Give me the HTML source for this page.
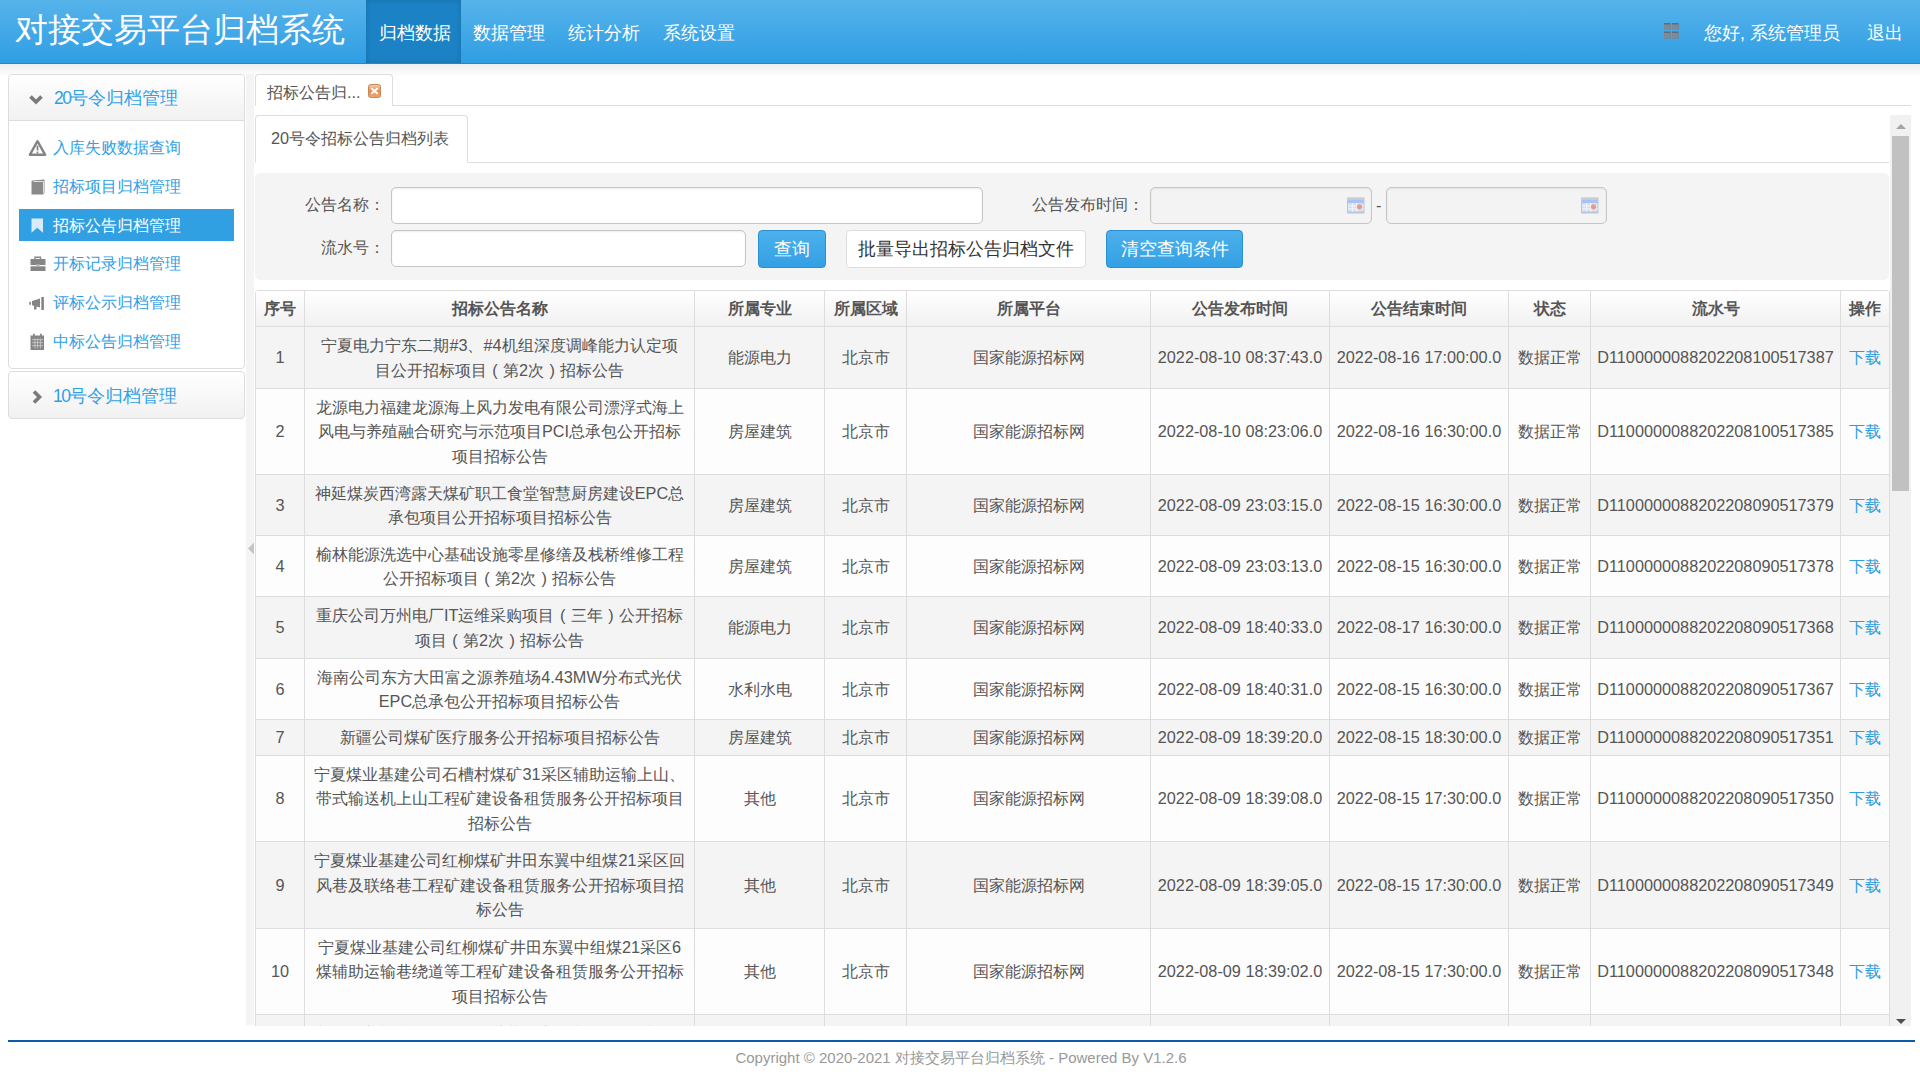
<!DOCTYPE html>
<html><head><meta charset="utf-8">
<style>
*{box-sizing:border-box}
html,body{margin:0;padding:0}
body{width:1920px;height:1080px;overflow:hidden;position:relative;background:#fff;font-family:"Liberation Sans",sans-serif;color:#555}
.abs{position:absolute}
#hdr{left:0;top:0;width:1920px;height:64px;background:linear-gradient(#56b3ea,#2f9ee4);border-bottom:1px solid #1a8ad8}
#shadow{left:0;top:64px;width:1920px;height:13px;background:linear-gradient(#eeeeee,#fff)}
.ttl{left:15px;top:9px;font-size:32.5px;line-height:42px;color:#fff;white-space:nowrap}
.nav{top:0;height:63px;line-height:67px;font-size:17.5px;color:#fff;white-space:nowrap}
.navact{left:366px;width:95px;line-height:63px;background:#1b83c5;box-shadow:inset 0 0 6px rgba(0,0,0,.15)}
.pnl{border:1px solid #ddd;border-radius:4px;background:#fff}
.ph{background:linear-gradient(#fff,#f1f1f1)}
.side{font-size:16.25px;color:#2fa1e6;white-space:nowrap;line-height:20px}

.tab1{left:255px;top:74px;width:138px;height:32px;border:1px solid #ddd;border-bottom:1px solid #fff;border-radius:4px 4px 0 0;background:#fff}
.tabline{left:255px;top:105px;width:1656px;height:1px;background:#ddd}
.t16{font-size:16.25px;white-space:nowrap;line-height:20px;color:#555}
.closei{left:368px;top:84px;width:13px;height:14px;border-radius:2px;background:linear-gradient(#f0a070,#d86a30);border:1px solid #c96028}
#sc{left:255px;top:115px;width:1635px;height:911px;overflow:hidden}
.tab2{left:0;top:0;width:213px;height:48px;border:1px solid #ddd;border-bottom:1px solid #fff;border-radius:4px 4px 0 0;background:#fff}
.tab2line{left:0;top:47px;width:1634px;height:1px;background:#ddd}
.form{left:0;top:58px;width:1634px;height:107px;background:#f4f4f4;border-radius:5px}
.inp{height:37px;border:1px solid #c6c6c6;border-radius:5px;background:#fff;box-shadow:inset 0 1px 2px rgba(0,0,0,.08)}
.btnb{height:38px;border:1px solid #2a8fd4;border-radius:4px;background:linear-gradient(#4db0eb,#33a0e4);color:#fff;font-size:17.5px;line-height:36px;text-align:center;white-space:nowrap}
.btnw{height:38px;border:1px solid #ddd;border-radius:4px;background:#fff;color:#333;font-size:17.5px;line-height:36px;text-align:center;white-space:nowrap}
table.g{position:absolute;left:0;top:175px;border-collapse:separate;border-spacing:0;table-layout:fixed;width:1635px;border-left:1px solid #ddd;border-top:1px solid #ddd;border-radius:4px 4px 0 0;font-size:16.25px;color:#555}
table.g td,table.g th{border-right:1px solid #ddd;border-bottom:1px solid #ddd;padding:0;text-align:center;vertical-align:middle;line-height:24.5px;white-space:nowrap}
table.g th{background:linear-gradient(#fff,#f1f1f1);color:#555;font-weight:bold;height:36px}
table.g tr.odd td{background:#f4f4f4}
table.g tr.even td{background:#fdfdfd}
.lk{color:#2c9de0}
.fp{display:inline-block;width:16.25px;text-align:center}
#sb{left:1890px;top:115px;width:21px;height:911px;background:#f1f1f1}
</style></head>
<body>
<div id="hdr" class="abs"></div>
<div id="shadow" class="abs"></div>
<div class="abs ttl">对接交易平台归档系统</div>
<div class="abs nav navact"></div>
<div class="abs nav" style="left:379px">归档数据</div>
<div class="abs nav" style="left:473px">数据管理</div>
<div class="abs nav" style="left:568px">统计分析</div>
<div class="abs nav" style="left:663px">系统设置</div>
<div class="abs nav" style="left:1704px">您好, 系统管理员</div>
<div class="abs nav" style="left:1867px">退出</div>

<!-- sidebar panel 1 -->
<div class="abs pnl" style="left:8px;top:74px;width:237px;height:295px;overflow:hidden">
  <div class="ph" style="height:46px;border-bottom:1px solid #ddd"></div>
</div>
<div class="abs side" style="left:54px;top:87.5px;font-size:17.5px"><span style="letter-spacing:-1.5px">20</span>号令归档管理</div>
<div class="abs" style="left:19px;top:209px;width:215px;height:32px;background:#30a0e3"></div>
<div class="abs side" style="left:53px;top:137px">入库失败数据查询</div>
<div class="abs side" style="left:53px;top:176px">招标项目归档管理</div>
<div class="abs side" style="left:53px;top:215px;color:#fff">招标公告归档管理</div>
<div class="abs side" style="left:53px;top:253px">开标记录归档管理</div>
<div class="abs side" style="left:53px;top:292px">评标公示归档管理</div>
<div class="abs side" style="left:53px;top:331px">中标公告归档管理</div>
<!-- sidebar panel 2 -->
<div class="abs pnl ph" style="left:8px;top:371px;width:237px;height:48px"></div>
<div class="abs side" style="left:53px;top:385.5px;font-size:17.5px"><span style="letter-spacing:-1.5px">10</span>号令归档管理</div>

<!-- splitter -->
<div class="abs" style="left:246px;top:74px;width:8px;height:951px;background:#f4f4f4"></div>


<!-- outer tab -->
<div class="abs tabline"></div>
<div class="abs tab1"></div>
<div class="abs t16" style="left:267px;top:82px">招标公告归...</div>
<svg class="abs" style="left:368px;top:84px" width="13" height="14" viewBox="0 0 13 14"><defs><linearGradient id="cg" x1="0" y1="0" x2="0" y2="1"><stop offset="0" stop-color="#f8cfa5"/><stop offset="0.5" stop-color="#e98a55"/><stop offset="1" stop-color="#eaa86f"/></linearGradient></defs><rect x="0.5" y="0.5" width="12" height="13" rx="2" fill="url(#cg)" stroke="#c28a5a" stroke-width="1"/><path d="M3.3 4.3 L9.7 9.7 M9.7 4.3 L3.3 9.7" stroke="#fff" stroke-width="2.1"/></svg>

<div id="sc" class="abs">
  <div class="abs tab2line"></div>
  <div class="abs tab2"></div>
  <div class="abs t16" style="left:16px;top:13px">20号令招标公告归档列表</div>
  <div class="abs form"></div>
  <div class="abs t16" style="left:50px;top:79px">公告名称：</div>
  <div class="abs inp" style="left:136px;top:72px;width:592px"></div>
  <div class="abs t16" style="left:777px;top:79px">公告发布时间：</div>
  <div class="abs inp" style="left:895px;top:72px;width:222px;background:#f3f3f3"></div>
  <div class="abs t16" style="left:1121px;top:80px">-</div>
  <div class="abs inp" style="left:1131px;top:72px;width:221px;background:#f3f3f3"></div>
  <div class="abs t16" style="left:66px;top:122px">流水号：</div>
  <div class="abs inp" style="left:136px;top:115px;width:355px"></div>
  <div class="abs btnb" style="left:503px;top:115px;width:68px">查询</div>
  <div class="abs btnw" style="left:591px;top:115px;width:240px">批量导出招标公告归档文件</div>
  <div class="abs btnb" style="left:851px;top:115px;width:137px">清空查询条件</div>
  <table class="g">
  <colgroup><col style="width:49px"><col style="width:390px"><col style="width:130px"><col style="width:82px"><col style="width:244px"><col style="width:179px"><col style="width:179px"><col style="width:82px"><col style="width:250px"><col style="width:49px"></colgroup>
  <tr><th>序号</th><th>招标公告名称</th><th>所属专业</th><th>所属区域</th><th>所属平台</th><th>公告发布时间</th><th>公告结束时间</th><th>状态</th><th>流水号</th><th>操作</th></tr>
<tr class="odd" style="height:62px"><td>1</td><td class="nm">宁夏电力宁东二期#3、#4机组深度调峰能力认定项<br>目公开招标项目<span class="fp">(</span>第2次<span class="fp">)</span>招标公告</td><td>能源电力</td><td>北京市</td><td>国家能源招标网</td><td>2022-08-10 08:37:43.0</td><td>2022-08-16 17:00:00.0</td><td>数据正常</td><td>D1100000088202208100517387</td><td><span class="lk">下载</span></td></tr>
<tr class="even" style="height:86px"><td>2</td><td class="nm">龙源电力福建龙源海上风力发电有限公司漂浮式海上<br>风电与养殖融合研究与示范项目PCI总承包公开招标<br>项目招标公告</td><td>房屋建筑</td><td>北京市</td><td>国家能源招标网</td><td>2022-08-10 08:23:06.0</td><td>2022-08-16 16:30:00.0</td><td>数据正常</td><td>D1100000088202208100517385</td><td><span class="lk">下载</span></td></tr>
<tr class="odd" style="height:61px"><td>3</td><td class="nm">神延煤炭西湾露天煤矿职工食堂智慧厨房建设EPC总<br>承包项目公开招标项目招标公告</td><td>房屋建筑</td><td>北京市</td><td>国家能源招标网</td><td>2022-08-09 23:03:15.0</td><td>2022-08-15 16:30:00.0</td><td>数据正常</td><td>D1100000088202208090517379</td><td><span class="lk">下载</span></td></tr>
<tr class="even" style="height:61px"><td>4</td><td class="nm">榆林能源洗选中心基础设施零星修缮及栈桥维修工程<br>公开招标项目<span class="fp">(</span>第2次<span class="fp">)</span>招标公告</td><td>房屋建筑</td><td>北京市</td><td>国家能源招标网</td><td>2022-08-09 23:03:13.0</td><td>2022-08-15 16:30:00.0</td><td>数据正常</td><td>D1100000088202208090517378</td><td><span class="lk">下载</span></td></tr>
<tr class="odd" style="height:62px"><td>5</td><td class="nm">重庆公司万州电厂IT运维采购项目<span class="fp">(</span>三年<span class="fp">)</span>公开招标<br>项目<span class="fp">(</span>第2次<span class="fp">)</span>招标公告</td><td>能源电力</td><td>北京市</td><td>国家能源招标网</td><td>2022-08-09 18:40:33.0</td><td>2022-08-17 16:30:00.0</td><td>数据正常</td><td>D1100000088202208090517368</td><td><span class="lk">下载</span></td></tr>
<tr class="even" style="height:61px"><td>6</td><td class="nm">海南公司东方大田富之源养殖场4.43MW分布式光伏<br>EPC总承包公开招标项目招标公告</td><td>水利水电</td><td>北京市</td><td>国家能源招标网</td><td>2022-08-09 18:40:31.0</td><td>2022-08-15 16:30:00.0</td><td>数据正常</td><td>D1100000088202208090517367</td><td><span class="lk">下载</span></td></tr>
<tr class="odd" style="height:36px"><td>7</td><td class="nm">新疆公司煤矿医疗服务公开招标项目招标公告</td><td>房屋建筑</td><td>北京市</td><td>国家能源招标网</td><td>2022-08-09 18:39:20.0</td><td>2022-08-15 18:30:00.0</td><td>数据正常</td><td>D1100000088202208090517351</td><td><span class="lk">下载</span></td></tr>
<tr class="even" style="height:86px"><td>8</td><td class="nm">宁夏煤业基建公司石槽村煤矿31采区辅助运输上山、<br>带式输送机上山工程矿建设备租赁服务公开招标项目<br>招标公告</td><td>其他</td><td>北京市</td><td>国家能源招标网</td><td>2022-08-09 18:39:08.0</td><td>2022-08-15 17:30:00.0</td><td>数据正常</td><td>D1100000088202208090517350</td><td><span class="lk">下载</span></td></tr>
<tr class="odd" style="height:87px"><td>9</td><td class="nm">宁夏煤业基建公司红柳煤矿井田东翼中组煤21采区回<br>风巷及联络巷工程矿建设备租赁服务公开招标项目招<br>标公告</td><td>其他</td><td>北京市</td><td>国家能源招标网</td><td>2022-08-09 18:39:05.0</td><td>2022-08-15 17:30:00.0</td><td>数据正常</td><td>D1100000088202208090517349</td><td><span class="lk">下载</span></td></tr>
<tr class="even" style="height:86px"><td>10</td><td class="nm">宁夏煤业基建公司红柳煤矿井田东翼中组煤21采区6<br>煤辅助运输巷绕道等工程矿建设备租赁服务公开招标<br>项目招标公告</td><td>其他</td><td>北京市</td><td>国家能源招标网</td><td>2022-08-09 18:39:02.0</td><td>2022-08-15 17:30:00.0</td><td>数据正常</td><td>D1100000088202208090517348</td><td><span class="lk">下载</span></td></tr>
<tr class="odd" style="height:62px"><td>11</td><td class="nm">宁夏煤业基建公司红柳煤矿井田东翼中组煤21采区回<br>风巷工程<span class="fp">(</span>第2次<span class="fp">)</span>公开招标项目招标公告</td><td>其他</td><td>北京市</td><td>国家能源招标网</td><td>2022-08-09 18:39:00.0</td><td>2022-08-15 17:30:00.0</td><td>数据正常</td><td>D1100000088202208090517347</td><td><span class="lk">下载</span></td></tr>
  </table>
</div>
<div id="sb" class="abs"></div>
<div class="abs" style="left:1892px;top:136px;width:17px;height:355px;background:#c1c1c1"></div>


<!-- sidebar icons -->
<svg class="abs" style="left:28px;top:94px" width="16" height="12" viewBox="0 0 16 12"><path d="M2.5 2.5 L8 8 L13.5 2.5" fill="none" stroke="#7a7a7a" stroke-width="3.6" stroke-linejoin="miter"/></svg>
<svg class="abs" style="left:31px;top:389px" width="13" height="16" viewBox="0 0 13 16"><path d="M3 2.5 L8.5 8 L3 13.5" fill="none" stroke="#7a7a7a" stroke-width="3.6"/></svg>
<svg class="abs" style="left:28px;top:139px" width="19" height="18" viewBox="0 0 19 18"><path d="M9.5 2.2 L17.2 15.8 L1.8 15.8 Z" fill="none" stroke="#858585" stroke-width="2.4" stroke-linejoin="round"/><rect x="8.6" y="6.5" width="1.8" height="5" fill="#858585"/><rect x="8.6" y="12.6" width="1.8" height="1.8" fill="#858585"/></svg>
<svg class="abs" style="left:31px;top:179px" width="15" height="16" viewBox="0 0 15 16"><path d="M1.5 1.5 L13.5 0.5 L13.5 13.5 L12 15.5 L0.5 15.5 L0.5 2 Z" fill="#8a8a8a"/><path d="M2.5 2.5 L12.5 2.5 L12.5 14" fill="none" stroke="#e0e0e0" stroke-width="1"/></svg>
<svg class="abs" style="left:31px;top:218px" width="13" height="16" viewBox="0 0 13 16"><path d="M0.5 0.5 L12 0.5 L12 14.8 L6.2 9.8 L0.5 14.8 Z" fill="#d6ecfa"/></svg>
<svg class="abs" style="left:30px;top:256px" width="16" height="16" viewBox="0 0 16 16"><path d="M5 3 L5 1.3 L10.5 1.3 L10.5 3" fill="none" stroke="#858585" stroke-width="1.4"/><rect x="0.5" y="3" width="15" height="6" fill="#858585"/><rect x="0.5" y="10.3" width="15" height="4.7" fill="#858585"/><rect x="6.5" y="8" width="3" height="2.5" fill="#b0b0b0"/></svg>
<svg class="abs" style="left:29px;top:296px" width="17" height="15" viewBox="0 0 17 15"><path d="M3 5 L11 2.5 L11 11.5 L7.5 10.5 L7.5 13.5 L5 13.5 L5 9.8 L3 9.2 Z" fill="#858585"/><rect x="12.3" y="1" width="2.6" height="13" fill="#858585"/><rect x="0.3" y="5.8" width="1.6" height="3" fill="#858585"/></svg>
<svg class="abs" style="left:30px;top:333px" width="15" height="18" viewBox="0 0 15 18"><rect x="3" y="0.8" width="1.8" height="3" fill="#858585"/><rect x="10" y="0.8" width="1.8" height="3" fill="#858585"/><rect x="0.5" y="2.5" width="13.5" height="14.5" fill="#858585"/><g fill="#c8c8c8"><rect x="2" y="6.2" width="11" height="0.9"/><rect x="2" y="9.2" width="11" height="0.9"/><rect x="2" y="12.2" width="11" height="0.9"/><rect x="4.5" y="5.5" width="0.9" height="10"/><rect x="7.2" y="5.5" width="0.9" height="10"/><rect x="9.9" y="5.5" width="0.9" height="10"/></g></svg>
<!-- header grid icon -->
<svg class="abs" style="left:1664px;top:23px" width="15" height="16" viewBox="0 0 15 16"><g fill="#5f6d7a"><rect x="0" y="0" width="6.5" height="7"/><rect x="8" y="0" width="6.5" height="7"/><rect x="0" y="8.5" width="6.5" height="7"/><rect x="8" y="8.5" width="6.5" height="7"/></g><g fill="#7e8a95"><rect x="0" y="1.5" width="6.5" height="5.5"/><rect x="8" y="1.5" width="6.5" height="5.5"/><rect x="0" y="10" width="6.5" height="5.5"/><rect x="8" y="10" width="6.5" height="5.5"/></g></svg>
<!-- splitter arrow -->
<svg class="abs" style="left:247px;top:542px" width="8" height="13" viewBox="0 0 8 13"><path d="M7 0.5 L7 12.5 L1 6.5 Z" fill="#c4c4c4"/></svg>
<!-- scrollbar arrows -->
<svg class="abs" style="left:1895px;top:122px" width="12" height="8" viewBox="0 0 12 8"><path d="M1 7 L11 7 L6 2 Z" fill="#a3a3a3"/></svg>
<svg class="abs" style="left:1895px;top:1018px" width="12" height="8" viewBox="0 0 12 8"><path d="M1 1 L11 1 L6 6 Z" fill="#505050"/></svg>

<svg class="abs" style="left:1347px;top:197px" width="18" height="17" viewBox="0 0 18 17"><rect x="0" y="0.3" width="17.5" height="2.5" fill="#c9ccd0"/><rect x="0" y="2.5" width="17.5" height="14" rx="1" fill="#b9c6d8"/><rect x="1" y="3" width="15.5" height="3" fill="#a9c1f3"/><rect x="1" y="6" width="15.5" height="8.6" fill="#d5e0ee"/><g fill="#f4f7fb"><rect x="1" y="8.5" width="15.5" height="0.9"/><rect x="1" y="11.5" width="15.5" height="0.9"/><rect x="5.2" y="6" width="0.9" height="8.6"/><rect x="9.4" y="6" width="0.9" height="8.6"/></g><circle cx="12.5" cy="9.8" r="2.6" fill="#e99a84"/></svg><svg class="abs" style="left:1581px;top:197px" width="18" height="17" viewBox="0 0 18 17"><rect x="0" y="0.3" width="17.5" height="2.5" fill="#c9ccd0"/><rect x="0" y="2.5" width="17.5" height="14" rx="1" fill="#b9c6d8"/><rect x="1" y="3" width="15.5" height="3" fill="#a9c1f3"/><rect x="1" y="6" width="15.5" height="8.6" fill="#d5e0ee"/><g fill="#f4f7fb"><rect x="1" y="8.5" width="15.5" height="0.9"/><rect x="1" y="11.5" width="15.5" height="0.9"/><rect x="5.2" y="6" width="0.9" height="8.6"/><rect x="9.4" y="6" width="0.9" height="8.6"/></g><circle cx="12.5" cy="9.8" r="2.6" fill="#e99a84"/></svg>
<!-- footer -->
<div class="abs" style="left:8px;top:1040px;width:1907px;height:2px;background:#0d5aa7"></div>
<div class="abs" style="left:0;top:1048px;width:1922px;text-align:center;font-size:15px;line-height:20px;color:#999">Copyright © 2020-2021 对接交易平台归档系统 - Powered By V1.2.6</div>
</body></html>
